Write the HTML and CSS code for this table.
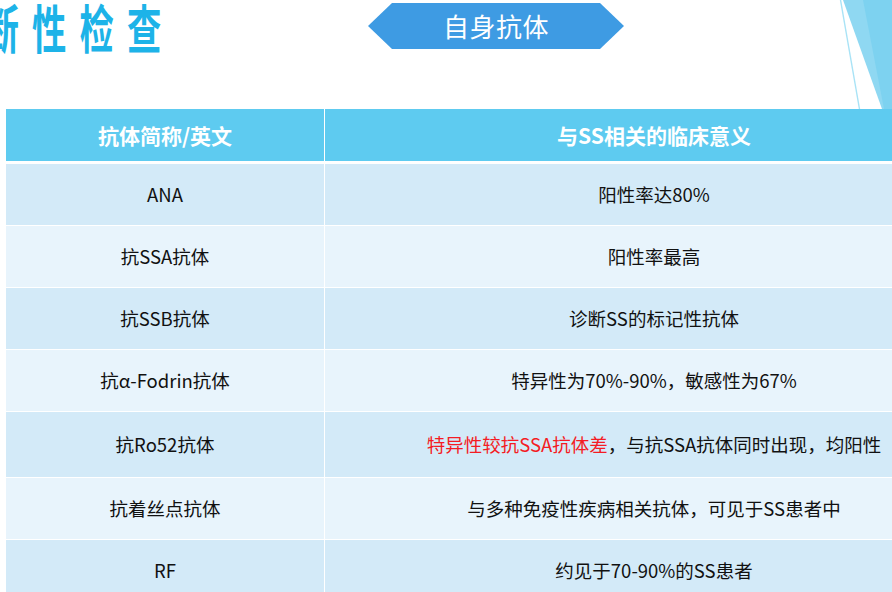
FILE: index.html
```html
<!DOCTYPE html>
<html lang="zh-CN">
<head>
<meta charset="utf-8">
<title>诊断性检查 - 自身抗体</title>
<link rel="stylesheet" href="styles.css">
</head>
<body>
<div class="slide">
  <header class="top">
    <div class="title-box"><h1 class="title">诊断性检查</h1></div>
    <div class="banner">自身抗体</div>
  </header>
  <svg class="deco" width="60" height="109" viewBox="0 0 60 109">
    <polygon points="11,0 60,0 60,109 50,109" fill="#8fd8f2"/>
    <polygon points="31,0 60,0 60,109 52,109" fill="#7dd2f0"/>
    <line x1="8.5" y1="0" x2="27.5" y2="109" stroke="#a9e3f6" stroke-width="1.4"/>
  </svg>
  <table class="grid">
    <thead>
      <tr><th class="c1">抗体简称/英文</th><th class="c2">与SS相关的临床意义</th></tr>
    </thead>
    <tbody>
      <tr class="dark"><td class="c1">ANA</td><td class="c2">阳性率达80%</td></tr>
      <tr class="light"><td class="c1">抗SSA抗体</td><td class="c2">阳性率最高</td></tr>
      <tr class="dark"><td class="c1">抗SSB抗体</td><td class="c2">诊断SS的标记性抗体</td></tr>
      <tr class="light"><td class="c1">抗α-Fodrin抗体</td><td class="c2">特异性为70%-90%，敏感性为67%</td></tr>
      <tr class="dark tall"><td class="c1">抗Ro52抗体</td><td class="c2"><span class="red">特异性较抗SSA抗体差</span>，与抗SSA抗体同时出现，均阳性</td></tr>
      <tr class="light"><td class="c1">抗着丝点抗体</td><td class="c2">与多种免疫性疾病相关抗体，可见于SS患者中</td></tr>
      <tr class="dark"><td class="c1">RF</td><td class="c2">约见于70-90%的SS患者</td></tr>
    </tbody>
  </table>
</div>
</body>
</html>
```

FILE: styles.css
```css
html, body {
  margin: 0;
  padding: 0;
  background: #ffffff;
}
body {
  width: 892px;
  height: 592px;
  overflow: hidden;
  font-family: "Noto Sans CJK SC", "Noto Sans", sans-serif;
}
.slide {
  position: relative;
  width: 892px;
  height: 592px;
  overflow: hidden;
}
.top {
  display: flex;
  align-items: flex-start;
  height: 109px;
}
.title-box {
  width: 368px;
  flex: none;
  height: 60px;
  overflow: visible;
}
.title {
  margin: 0;
  margin-left: -63px;
  margin-top: -3px;
  font-size: 52px;
  line-height: 60px;
  font-weight: 700;
  color: #1db3e8;
  letter-spacing: 20px;
  white-space: nowrap;
  transform: scaleX(0.66);
  transform-origin: left center;
}
.banner {
  margin-top: 3px;
  width: 256px;
  height: 46px;
  flex: none;
  background: #3e9be3;
  clip-path: polygon(0 50%, 24px 0, 232px 0, 256px 50%, 232px 100%, 24px 100%);
  color: #ffffff;
  font-size: 26px;
  line-height: 46px;
  text-align: center;
  letter-spacing: 0.5px;
}
.deco {
  position: absolute;
  top: 0;
  right: 0;
  display: block;
}
.grid {
  margin-left: 6px;
  width: 977px;
  border-collapse: separate;
  border-spacing: 0;
  table-layout: fixed;
}
.grid th, .grid td {
  padding: 0;
  text-align: center;
  vertical-align: middle;
}
.grid .c1 { width: 318px; }
.grid .c2 { border-left: 1px solid #ffffff; }
.grid th {
  height: 52px;
  background: #5ecbf0;
  color: #ffffff;
  font-size: 21px;
  font-weight: 700;
  border-bottom: 3px solid #ffffff;
}
.grid td {
  height: 59px;
  padding-bottom: 2px;
  font-size: 18.5px;
  color: #111111;
  border-bottom: 1px solid #ffffff;
}
.grid tr.tall td { height: 63px; }
.grid tr.dark td { background: #d3eaf8; }
.grid tr.light td { background: #e8f4fc; }
.red { color: #f41c24; }
```
